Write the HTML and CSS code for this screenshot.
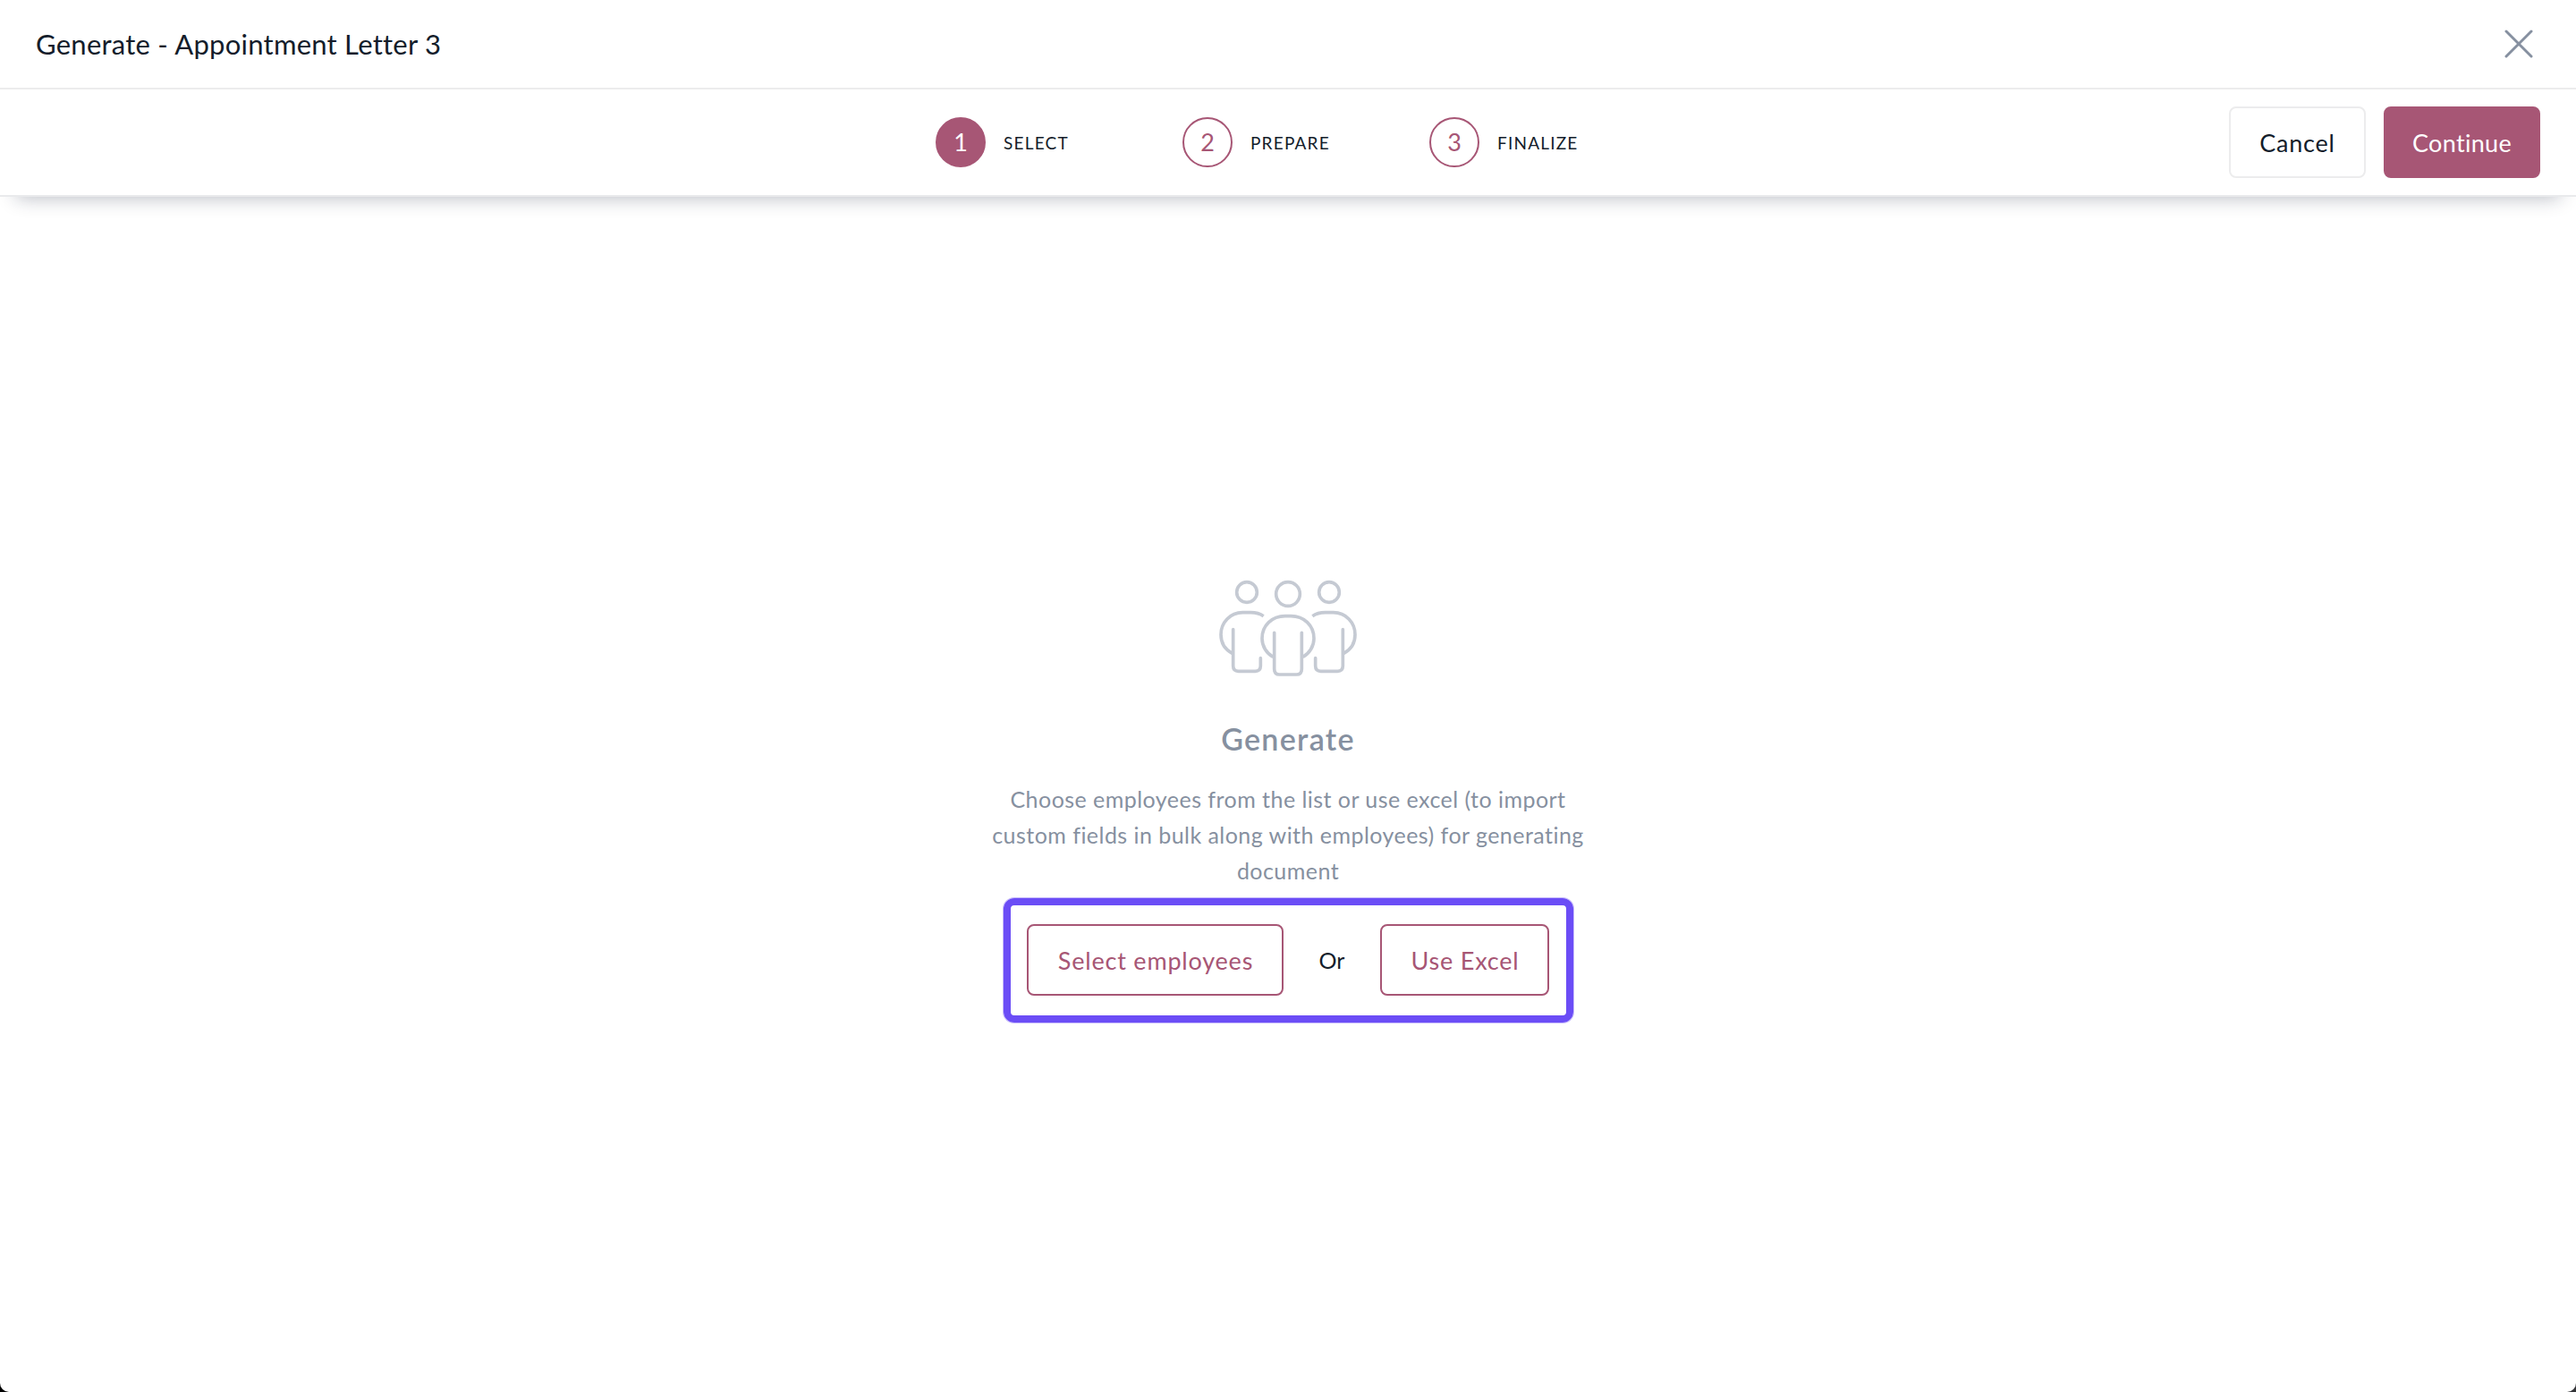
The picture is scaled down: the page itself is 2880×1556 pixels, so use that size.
FILE: index.html
```html
<!DOCTYPE html>
<html lang="en">
<head>
  <meta charset="UTF-8">
  <meta name="viewport" content="width=device-width, initial-scale=1.0">
  <title>Generate - Appointment Letter 3</title>
  <link rel="stylesheet" href="styles.css">
</head>
<body>

  <div class="page">
    <header class="title-bar">
      <h1>Generate - Appointment Letter 3</h1>
      <button class="close-btn" title="Close">
        <svg width="32" height="32" viewBox="0 0 32 32"><path d="M2 2 L30 30 M30 2 L2 30"/></svg>
      </button>
    </header>

    <!-- Steps + actions -->
    <div class="step-bar">
      <ol class="steps">
        <li class="step active"><b>1</b><span>SELECT</span></li>
        <li class="step"><b>2</b><span>PREPARE</span></li>
        <li class="step"><b>3</b><span>FINALIZE</span></li>
      </ol>
      <div class="actions">
        <button class="btn btn-cancel">Cancel</button>
        <button class="btn btn-primary">Continue</button>
      </div>
    </div>

    <!-- Empty state -->
    <main class="empty">
      <svg class="people" width="156" height="111" viewBox="66 50 468 333">
        <g id="side">
          <circle cx="162" cy="95" r="34"/>
          <path class="arms" d="M218 175 C205 166 190 163 175 163 H148 C106 163 75 197 75 237 C75 265 90 288 113 300"/>
          <path d="M116 220 V342 Q116 360 134 360 H190 Q208 360 208 342 V316"/>
        </g>
        <use href="#side" transform="translate(600 0) scale(-1 1)"/>
        <circle cx="300" cy="101" r="40"/>
        <path class="arms" d="M250 312 C228 300 213 276 213 250 C213 206 247 175 290 175 H310 C353 175 387 206 387 250 C387 276 372 300 350 312"/>
        <path d="M254 231 V352 Q254 371 272 371 H328 Q346 371 346 352 V231"/>
      </svg>
      <h2>Generate</h2>
      <p>Choose employees from the list or use excel (to import<br>custom fields in bulk along with employees) for generating<br>document</p>
      <div class="choices">
        <button class="btn btn-outline select-btn">Select employees</button>
        <span class="or">Or</span>
        <button class="btn btn-outline excel-btn">Use Excel</button>
      </div>
    </main>
  </div>

</body>
</html>
```

FILE: styles.css
```css
* { box-sizing: border-box; margin: 0; padding: 0; }
html {
  background: linear-gradient(90deg, #000 50%, #333438 50%);
}
body {
  height: 100vh;
  font-family: Lato, "Open Sans", sans-serif;
  color: #141d2b;
}
.page {
  height: 100%;
  display: flex;
  flex-direction: column;
  background: #fff;
  border-radius: 0 0 10px 10px;
}
button {
  font-family: inherit;
  background: none;
  border: none;
  cursor: pointer;
}
/* Title bar */
.title-bar {
  display: flex;
  align-items: center;
  justify-content: space-between;
  height: 100px;
  padding: 0 48px 0 40px;
  border-bottom: 2px solid #ececed;
}
h1 {
  font-size: 31px;
  font-weight: 400;
  letter-spacing: 0.25px;
}
.close-btn {
  width: 32px;
  height: 32px;
}
.close-btn svg {
  display: block;
  fill: none;
  stroke: #8690a0;
  stroke-width: 3;
  stroke-linecap: round;
}
/* Step bar */
.step-bar {
  display: grid;
  grid-template-columns: 1fr auto 1fr;
  align-items: center;
  height: 120px;
  padding: 0 40px;
  border-bottom: 2px solid #e9eaec;
  box-shadow: 0 19px 20px -18px rgba(20, 30, 55, 0.3);
}
.steps {
  grid-column: 2;
  display: flex;
  gap: 40px;
  list-style: none;
}
.step {
  display: flex;
  align-items: center;
  gap: 20px;
  width: 236px;
  font-size: 19px;
  letter-spacing: 1.2px;
}
.step b {
  display: grid;
  place-items: center;
  width: 56px;
  height: 56px;
  padding-bottom: 2px;
  border: 2px solid #a75675;
  border-radius: 50%;
  color: #a75675;
  font-size: 27px;
  font-weight: 400;
  letter-spacing: 0;
}
.step.active b {
  background: #a75675;
  color: #fff;
}
.actions {
  display: flex;
  justify-content: flex-end;
  gap: 20px;
}
.btn {
  height: 80px;
  border: 2px solid #a75675;
  border-radius: 8px;
  font-size: 27px;
  letter-spacing: 0.8px;
}
.btn-cancel {
  width: 153px;
  border-color: #ececed;
  color: #141d2b;
}
.btn-primary {
  width: 175px;
  background: #a75675;
  color: #fff;
  letter-spacing: 0.3px;
}
.btn-outline {
  padding-left: 2px;
  color: #a75675;
}
/* Empty state */
.empty {
  flex: 1;
  display: flex;
  flex-direction: column;
  align-items: center;
  padding-top: 427px;
}
.people {
  fill: none;
  stroke: #c5cad3;
  stroke-width: 11;
  stroke-linecap: round;
}
.people .arms {
  stroke-linecap: butt;
}
h2 {
  margin-top: 48px;
  font-size: 34px;
  font-weight: 600;
  line-height: 40px;
  letter-spacing: 1.3px;
  color: #8690a0;
}
p {
  margin-top: 27px;
  font-size: 25px;
  line-height: 40px;
  letter-spacing: 0.46px;
  text-align: center;
  color: #8690a0;
}
.choices {
  display: flex;
  align-items: center;
  justify-content: space-between;
  width: 637px;
  height: 139px;
  margin-top: 11px;
  padding: 0 19px 1px 18px;
  border: 8px solid #6b4df6;
  border-radius: 12px;
  box-shadow: 0 0 0 1px rgba(107, 77, 246, 0.4);
}
.select-btn {
  width: 287px;
}
.excel-btn {
  width: 189px;
}
.or {
  padding-left: 1px;
  font-size: 25px;
}
```
